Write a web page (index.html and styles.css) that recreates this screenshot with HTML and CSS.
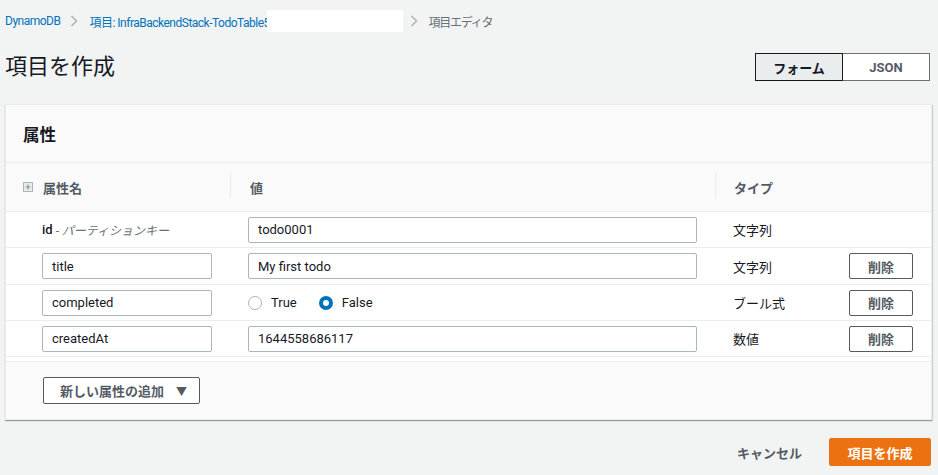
FILE: index.html
```html
<!DOCTYPE html>
<html lang="ja">
<head>
<meta charset="utf-8">
<title>項目を作成</title>
<link rel="stylesheet" href="styles.css">
</head>
<body>
<div class="page">
  <nav class="crumbs">
    <a class="crumb-link" href="#">DynamoDB</a>
    <span class="chev"><svg width="8" height="12" viewBox="0 0 8 12"><path d="M1.5 1 L6.5 6 L1.5 11" fill="none" stroke="#aab7b8" stroke-width="1.6"/></svg></span>
    <a class="crumb-link crumb-table" href="#">項目: InfraBackendStack-TodoTable5</a><span class="redact"></span>
    <span class="chev chev-after"><svg width="8" height="12" viewBox="0 0 8 12"><path d="M1.5 1 L6.5 6 L1.5 11" fill="none" stroke="#aab7b8" stroke-width="1.6"/></svg></span>
    <span class="crumb-current">項目エディタ</span>
  </nav>

  <div class="title-row">
    <h1 class="title">項目を作成</h1>
    <div class="toggle">
      <button class="toggle-btn is-active">フォーム</button>
      <button class="toggle-btn">JSON</button>
    </div>
  </div>

  <section class="panel">
    <header class="panel-head"><h2 class="panel-title">属性</h2></header>

    <div class="row row-head">
      <div class="cell c1 head-cell">
        <svg class="plus" width="10" height="10" viewBox="0 0 10 10"><rect x="0.5" y="0.5" width="9" height="9" fill="#e9ebeb" stroke="#aab7b8"/><path d="M5 2.5v5M2.5 5h5" stroke="#879596" stroke-width="1.2"/></svg>
        属性名
      </div>
      <div class="cell c2 head-cell"><span class="divider"></span>値</div>
      <div class="cell c3 head-cell"><span class="divider"></span>タイプ</div>
    </div>

    <div class="row">
      <div class="cell c1"><span class="key-name">id</span><span class="key-note"> - パーティションキー</span></div>
      <div class="cell c2"><div class="input value-input">todo0001</div></div>
      <div class="cell c3"><span class="type">文字列</span></div>
    </div>

    <div class="row row-tall">
      <div class="cell c1"><div class="input name-input">title</div></div>
      <div class="cell c2"><div class="input value-input">My first todo</div></div>
      <div class="cell c3"><span class="type">文字列</span><button class="btn-del">削除</button></div>
    </div>

    <div class="row">
      <div class="cell c1"><div class="input name-input">completed</div></div>
      <div class="cell c2">
        <label class="radio"><span class="radio-dot"></span>True</label>
        <label class="radio"><span class="radio-dot checked"></span>False</label>
      </div>
      <div class="cell c3"><span class="type">ブール式</span><button class="btn-del">削除</button></div>
    </div>

    <div class="row">
      <div class="cell c1"><div class="input name-input">createdAt</div></div>
      <div class="cell c2"><div class="input value-input">1644558686117</div></div>
      <div class="cell c3"><span class="type">数値</span><button class="btn-del">削除</button></div>
    </div>

    <div class="rows-end"></div>

    <footer class="panel-foot">
      <button class="btn-add">新しい属性の追加<span class="caret">▼</span></button>
    </footer>
  </section>

  <div class="actions">
    <button class="btn-cancel">キャンセル</button>
    <button class="btn-primary">項目を作成</button>
  </div>
</div>
</body>
</html>
```

FILE: styles.css
```css
* { box-sizing: border-box; }
html, body { margin: 0; padding: 0; }
body {
  background: #f2f3f3;
  font-family: Roboto, "Noto Sans CJK JP", sans-serif;
  font-size: 13px;
  color: #16191f;
}
button { font-family: inherit; cursor: pointer; }

.page { padding: 0 6px 0 5px; width: 938px; }

/* breadcrumbs */
.crumbs {
  display: flex;
  align-items: center;
  height: 42px;
  font-size: 12px;
  letter-spacing: -0.5px;
  white-space: nowrap;
}
.crumb-link { color: #0073bb; text-decoration: none; }
.chev { display: inline-flex; align-items: center; margin: 0 11px 0 10px; }
.chev-after { margin: 0 10px 0 7px; }
.crumb-table { display: inline-block; width: 178px; }
.redact { display: inline-block; width: 136px; height: 22px; background: #fff; }
.crumb-current { color: #687078; letter-spacing: -1.2px; }

/* title */
.title-row {
  display: flex;
  justify-content: space-between;
  align-items: center;
  margin-top: 11px;
  height: 28px;
}
.title { margin: 0; font-size: 22px; font-weight: 400; color: #16191f; line-height: 28px; }
.toggle { display: flex; margin-right: 2px; }
.toggle-btn {
  width: 88px;
  height: 28px;
  border: 1px solid #687078;
  background: #fff;
  color: #545b64;
  font-weight: 700;
  font-size: 13px;
  padding: 0;
}
.toggle-btn.is-active {
  background: #eaeded;
  border-color: #16191f;
  color: #16191f;
}
.toggle-btn + .toggle-btn { border-left: none; width: 87px; }

/* panel */
.panel {
  margin-top: 23px;
  width: 927px;
  background: #fff;
  border: 1px solid #eaeded;
  box-shadow: 0 1px 1px 0 rgba(0, 28, 36, 0.3), 1px 1px 1px 0 rgba(0, 28, 36, 0.12);
}
.panel-head {
  height: 58px;
  background: #fafafa;
  border-bottom: 1px solid #eaeded;
  display: flex;
  align-items: center;
  padding-left: 17px;
}
.panel-title { margin: 0; font-size: 16.5px; font-weight: 700; color: #16191f; }

.row {
  display: grid;
  grid-template-columns: 224px 485px 1fr;
  height: 36px;
  border-bottom: 1px solid #eaeded;
}
.row-tall { height: 37px; }
.row-head { height: 49px; background: #fafafa; }
.cell { display: flex; align-items: center; position: relative; }
.c1 { padding-left: 36px; }
.c2 { padding-left: 18px; }
.c3 { padding-left: 18px; padding-right: 18px; justify-content: space-between; }
.head-cell { font-weight: 700; color: #545b64; }
.row-head .c1 { padding-left: 17px; }
.row-head .c2 { padding-left: 20px; }
.row-head .c3 { padding-left: 19px; }
.plus { margin-right: 10px; }
.divider {
  position: absolute;
  left: 0;
  top: 9px;
  bottom: 12px;
  width: 1px;
  background: #eaeded;
}

.key-name { font-weight: 500; color: #16191f; }
.key-note { font-style: italic; font-size: 12px; color: #687078; margin-left: 3px; }

.input {
  height: 26px;
  border: 1px solid #aab7b8;
  border-radius: 2px;
  background: #fff;
  padding: 0 9px;
  display: flex;
  align-items: center;
  color: #16191f;
}
.name-input { width: 170px; }
.value-input { width: 449px; }

.type { color: #16191f; }
.btn-del {
  width: 64px;
  height: 26px;
  border: 1px solid #545b64;
  border-radius: 2px;
  background: #fff;
  color: #545b64;
  font-weight: 700;
  font-size: 13px;
  padding: 0;
}

.radio { display: inline-flex; align-items: center; margin-right: 22px; color: #16191f; }
.radio-dot {
  width: 14px;
  height: 14px;
  border-radius: 50%;
  border: 1px solid #aab7b8;
  background: #fff;
  margin-right: 9px;
}
.radio-dot.checked {
  border: 4.5px solid #0073bb;
}

.rows-end { height: 5px; border-bottom: 1px solid #eaeded; }

.panel-foot {
  background: #fafafa;
  padding: 15px 0 15px 37px;
}
.btn-add {
  height: 27px;
  width: 157px;
  border: 1px solid #545b64;
  border-radius: 2px;
  background: #fff;
  color: #545b64;
  font-weight: 700;
  font-size: 13px;
  padding: 0 0 0 4px;
  display: flex;
  align-items: center;
  justify-content: center;
}
.caret { font-size: 11px; margin-left: 12px; }

/* bottom actions */
.actions {
  display: flex;
  justify-content: flex-end;
  align-items: center;
  margin-top: 18px;
  width: 926px;
}
.btn-cancel {
  background: none;
  border: none;
  color: #545b64;
  font-weight: 700;
  font-size: 13px;
  padding: 0;
  margin-right: 27px;
}
.btn-primary {
  width: 102px;
  height: 28px;
  border: 1px solid #ec7211;
  border-radius: 2px;
  background: #ec7211;
  color: #fff;
  font-weight: 700;
  font-size: 13px;
  padding: 0;
}
```
